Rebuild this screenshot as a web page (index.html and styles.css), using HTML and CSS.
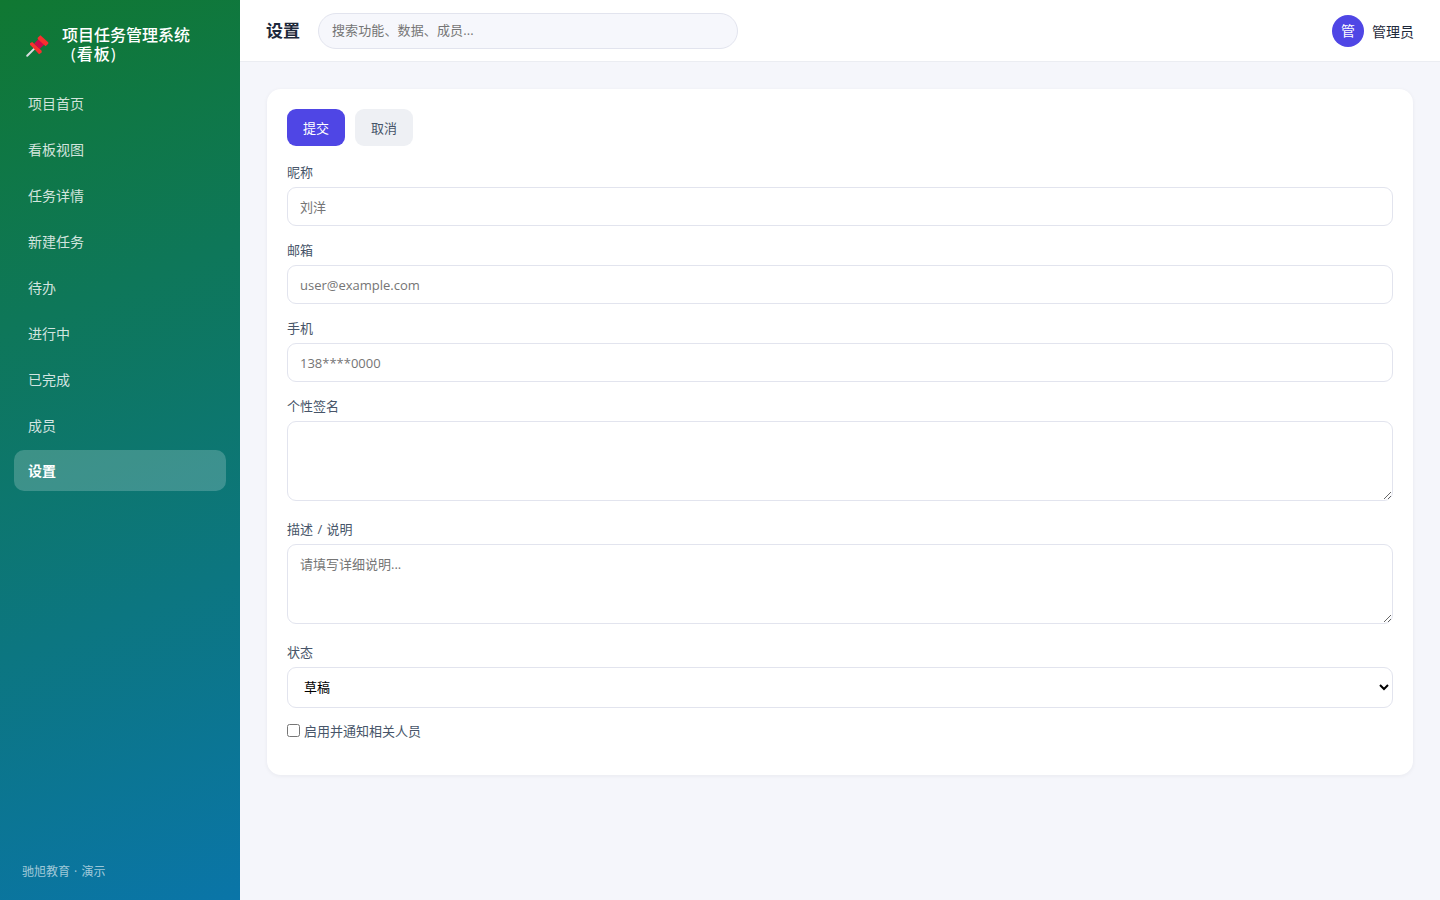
FILE: index.html
```html
<!DOCTYPE html>
<html lang="zh-CN">
<head>
<meta charset="UTF-8">
<title>设置</title>
<link rel="stylesheet" href="styles.css">
</head>
<body>
<div class="app">
  <aside class="sidebar">
    <div class="brand">
      <svg class="pin" viewBox="0 0 24 24" width="24" height="24">
        <path d="M2.2 21.8 9.6 14.4" stroke="#d9dde0" stroke-width="2" stroke-linecap="round"/>
        <path d="m9.2 9.5 5.2-5.2 5.5 5.6-5.2 5.2z" fill="#ca0b4a"/>
        <path d="m15.4 1.2 8 7.2-.2 1.4-2.6 2.5-7.9-7.4V3.7z" fill="#f92f2f"/>
        <path d="m7.2 8 9.5 8.8v1.8l-2.6 1.6-4.2-4.4-4.9-5V9.3z" fill="#f92f2f"/>
      </svg>
      <div class="brand-name">项目任务管理系统<br><span class="brand-sub">(看板)</span></div>
    </div>
    <nav class="nav">
      <a class="nav-item">项目首页</a>
      <a class="nav-item">看板视图</a>
      <a class="nav-item">任务详情</a>
      <a class="nav-item">新建任务</a>
      <a class="nav-item">待办</a>
      <a class="nav-item">进行中</a>
      <a class="nav-item">已完成</a>
      <a class="nav-item">成员</a>
      <a class="nav-item active">设置</a>
    </nav>
    <div class="side-foot">驰旭教育 · 演示</div>
  </aside>
  <main class="main">
    <header class="topbar">
      <h1 class="title">设置</h1>
      <input class="search" type="text" placeholder="搜索功能、数据、成员...">
      <div class="user"><span class="avatar">管</span><span>管理员</span></div>
    </header>
    <section class="card">
      <div class="actions">
        <button class="btn primary">提交</button>
        <button class="btn">取消</button>
      </div>
      <label class="label">昵称</label>
      <input class="field" type="text" placeholder="刘洋">
      <label class="label">邮箱</label>
      <input class="field" type="text" placeholder="user@example.com">
      <label class="label">手机</label>
      <input class="field" type="text" placeholder="138****0000">
      <label class="label">个性签名</label>
      <textarea class="field area"></textarea>
      <label class="label spaced">描述 / 说明</label>
      <textarea class="field area" placeholder="请填写详细说明..."></textarea>
      <label class="label">状态</label>
      <select class="field select"><option>草稿</option></select>
      <label class="check"><input class="box" type="checkbox"><span>启用并通知相关人员</span></label>
    </section>
  </main>
</div>
</body>
</html>
```
FILE: styles.css
```css
* { box-sizing: border-box; }
body, input, textarea, select, button {
  font-family: "Open Sans", "Noto Sans CJK SC", sans-serif;
}
body { margin: 0; background: #f5f6fb; color: #1e293b; font-size: 14px; }
.app { display: flex; height: 900px; }
.sidebar {
  width: 240px;
  flex: none;
  display: flex;
  flex-direction: column;
  padding: 25px 14px 19px;
  background: linear-gradient(160deg, #107832, #0a75a8);
  color: #fff;
}
.brand { display: flex; align-items: center; gap: 12px; height: 40px; padding-left: 11px; }
.pin { flex: none; fill: none; margin-top: 2px; }
.brand-name { padding-left: 1px; font-size: 16px; line-height: 19.5px; font-weight: 500; white-space: nowrap; }
.brand-sub { padding-left: 9px; letter-spacing: 1px; }
.nav { display: flex; flex-direction: column; gap: 5px; margin-top: 17px; }
.nav-item {
  display: flex;
  align-items: center;
  height: 41px;
  padding: 0 14px;
  border-radius: 10px;
  color: rgba(255, 255, 255, .82);
}
.nav-item.active { padding-bottom: 2px; background: rgba(255, 255, 255, .2); color: #fff; font-weight: 700; }
.side-foot { margin-top: auto; padding-left: 8px; font-size: 12px; line-height: 18px; word-spacing: 1px; color: rgba(255, 255, 255, .62); }
.main { flex: 1; min-width: 0; }
.topbar {
  display: flex;
  align-items: center;
  height: 62px;
  padding: 0 26px;
  background: #fff;
  border-bottom: 1px solid #ebedf2;
}
.title { margin: 0 18px 0 0; font-size: 17px; line-height: 24px; font-weight: 700; }
.search {
  width: 420px;
  height: 36px;
  padding: 0 14px 1px 13px;
  border: 1px solid #e2e4ee;
  border-radius: 18px;
  background: #f6f7fc;
  font-size: 13px;
  letter-spacing: .12px;
}
.user { display: flex; align-items: center; gap: 8px; margin-left: auto; }
.avatar {
  display: grid;
  place-items: center;
  width: 32px;
  height: 32px;
  padding-bottom: 2px;
  border-radius: 50%;
  background: #4f46e5;
  color: #fff;
}
.card {
  display: flex;
  flex-direction: column;
  height: 686px;
  margin: 27px 27px 0;
  padding: 20px;
  border-radius: 14px;
  background: #fff;
  box-shadow: 0 1px 4px rgba(30, 41, 59, .06);
}
.actions { display: flex; gap: 10px; margin-bottom: 16px; }
.btn {
  width: 58px;
  height: 37px;
  padding: 0 0 1px;
  border: 0;
  border-radius: 9px;
  background: #eef0f4;
  color: #475569;
  font-size: 13px;
}
.btn.primary { background: #4f46e5; color: #fff; }
.label { height: 20px; margin-bottom: 5px; font-size: 13px; line-height: 20px; color: #475569; }
.spaced { word-spacing: 1px; }
.field {
  width: 100%;
  height: 39px;
  margin: 0 0 14px;
  padding: 0 12px;
  border: 1px solid #e2e4ee;
  border-radius: 9px;
  background: #fff;
  font-size: 13px;
}
.area { height: 80px; margin-bottom: 18px; padding: 9px 12px; resize: vertical; }
.select { height: 41px; margin-bottom: 14px; padding-bottom: 1px; color: #000; }
.check { display: flex; align-items: center; gap: 4px; height: 20px; font-size: 13px; line-height: 18px; color: #475569; }
.check span { margin-bottom: 2px; }
.box { width: 13px; height: 13px; margin: 0 0 3px; }
```
